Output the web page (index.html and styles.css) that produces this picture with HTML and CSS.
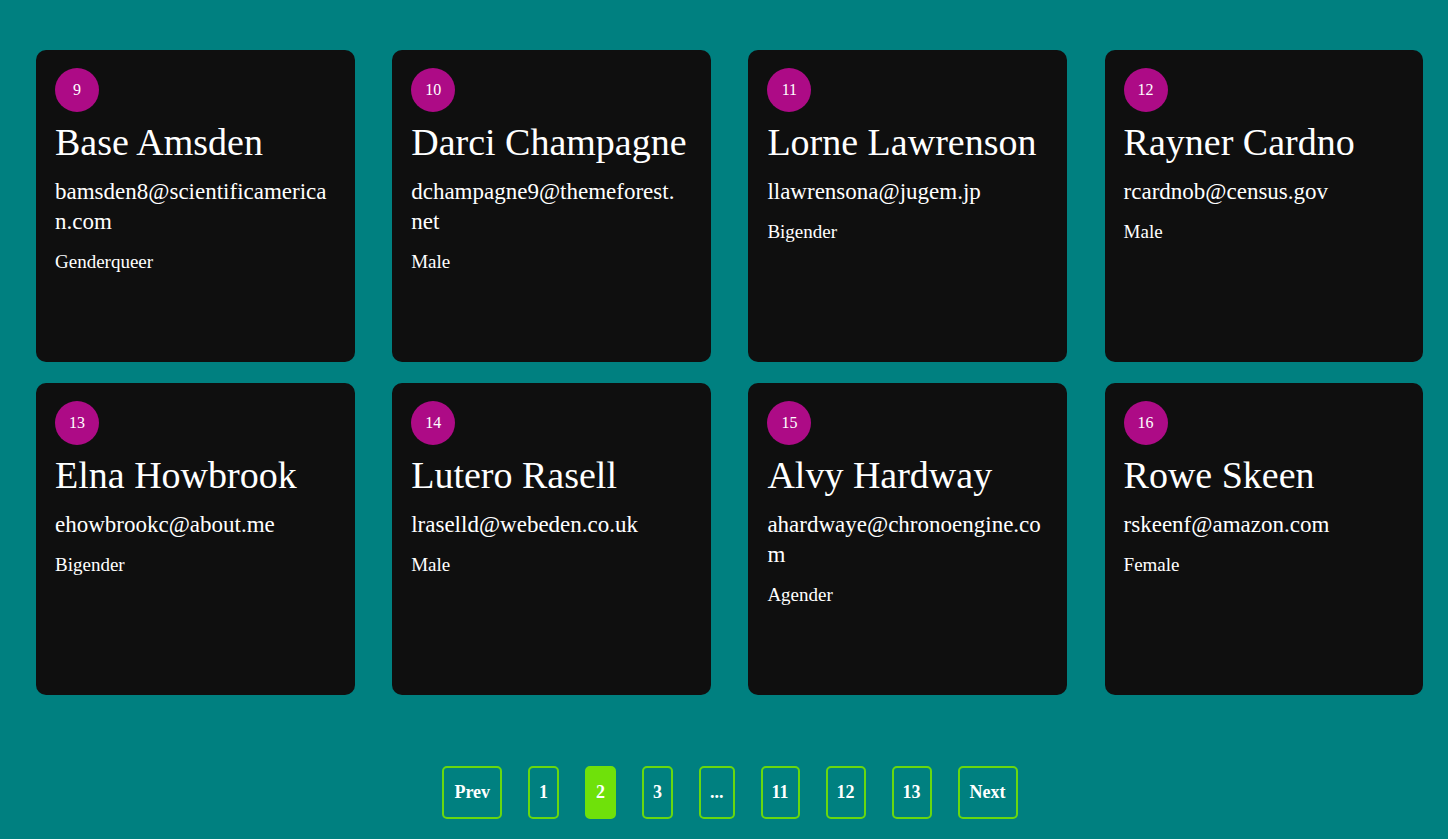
FILE: index.html
```html
<!DOCTYPE html>
<html lang="en">
<head>
<meta charset="utf-8">
<title>Users</title>
<link rel="stylesheet" href="styles.css">
</head>
<body>
<main class="page">
  <section class="grid">
    <article class="card"><div class="badge">9</div><h2 class="name">Base Amsden</h2><p class="email">bamsden8@scientificamerican.com</p><p class="gender">Genderqueer</p></article>
    <article class="card"><div class="badge">10</div><h2 class="name">Darci Champagne</h2><p class="email">dchampagne9@themeforest.net</p><p class="gender">Male</p></article>
    <article class="card"><div class="badge">11</div><h2 class="name">Lorne Lawrenson</h2><p class="email">llawrensona@jugem.jp</p><p class="gender">Bigender</p></article>
    <article class="card"><div class="badge">12</div><h2 class="name">Rayner Cardno</h2><p class="email">rcardnob@census.gov</p><p class="gender">Male</p></article>
    <article class="card"><div class="badge">13</div><h2 class="name">Elna Howbrook</h2><p class="email">ehowbrookc@about.me</p><p class="gender">Bigender</p></article>
    <article class="card"><div class="badge">14</div><h2 class="name">Lutero Rasell</h2><p class="email">lraselld@webeden.co.uk</p><p class="gender">Male</p></article>
    <article class="card"><div class="badge">15</div><h2 class="name">Alvy Hardway</h2><p class="email">ahardwaye@chronoengine.com</p><p class="gender">Agender</p></article>
    <article class="card"><div class="badge">16</div><h2 class="name">Rowe Skeen</h2><p class="email">rskeenf@amazon.com</p><p class="gender">Female</p></article>
  </section>
  <nav class="pager">
    <button class="pg pg-wide">Prev</button>
    <button class="pg">1</button>
    <button class="pg active">2</button>
    <button class="pg">3</button>
    <button class="pg">...</button>
    <button class="pg">11</button>
    <button class="pg">12</button>
    <button class="pg">13</button>
    <button class="pg pg-wide">Next</button>
  </nav>
</main>
</body>
</html>
```

FILE: styles.css
```css
* { box-sizing: border-box; }
html, body {
  margin: 0;
  padding: 0;
  background: #008080;
}
body {
  font-family: "Liberation Serif", "Times New Roman", serif;
  color: #ffffff;
}
.page {
  padding: 50px 25px 0 36px;
}
.grid {
  display: grid;
  grid-template-columns: repeat(4, 318.8px);
  column-gap: 37.4px;
  row-gap: 21px;
}
.card {
  height: 312px;
  background: #0f0f0f;
  border-radius: 10px;
  padding: 18px 26px 18px 19px;
}
.badge {
  width: 44px;
  height: 44px;
  border-radius: 50%;
  background: #ad0b86;
  display: flex;
  align-items: center;
  justify-content: center;
  font-size: 16px;
  line-height: 1;
}
.name {
  margin: 8px 0 0;
  font-weight: normal;
  font-size: 38px;
  line-height: 44px;
  white-space: nowrap;
}
.email {
  margin: 13px 0 0;
  font-size: 23px;
  line-height: 30px;
  word-break: break-all;
}
.gender {
  margin: 12px 0 0;
  font-size: 19px;
  line-height: 26px;
}
.pager {
  display: flex;
  justify-content: center;
  gap: 26px;
  margin-top: 71px;
  padding-left: 1px;
}
.pg {
  height: 53px;
  min-width: 31px;
  padding: 0 9px;
  border: 2px solid #68d80e;
  border-radius: 5px;
  background: transparent;
  color: #ffffff;
  font-family: "Liberation Serif", "Times New Roman", serif;
  font-weight: bold;
  font-size: 18px;
}
.pg-wide {
  padding: 0 10px;
}
.active {
  background: #6fe10a;
  border-color: #6fe10a;
}
```
